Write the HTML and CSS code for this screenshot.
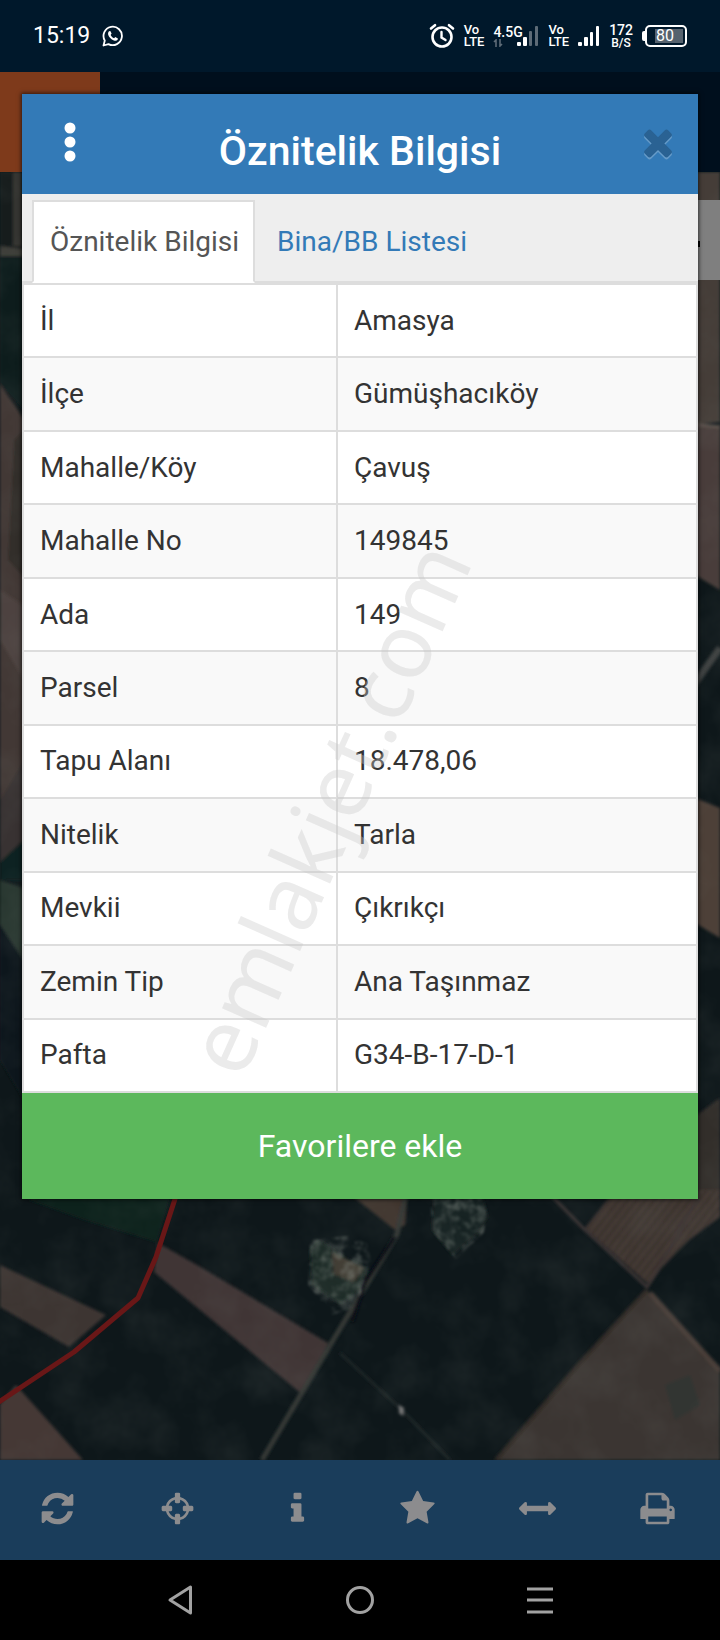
FILE: index.html
```html
<!DOCTYPE html>
<html lang="tr">
<head>
<meta charset="UTF-8">
<meta name="viewport" content="width=device-width, initial-scale=1">
<title>Öznitelik Bilgisi</title>
<link rel="stylesheet" href="styles.css">
</head>
<body>
<div class="screen">
	<div class="status">
		<span class="clock">15:19</span>
		<svg class="whatsapp" width="22" height="22" viewBox="0 0 22 22" fill="none" stroke="#fff">
			<path d="M1.500 20.500L2.800 15.600A9.200 9.200 0 1 1 6.500 19.100Z" stroke-width="1.800" stroke-linejoin="round"/>
			<path d="M7 6.200l1.300-.3 1.300 2.700-1 1.300c.8 1.600 1.900 2.600 3.500 3.300l1.200-1.200 2.600 1.400-.3 1.300c-.8 1.100-2.200 1.300-3.700.7-2.900-1.100-5-3.200-5.700-5.700-.3-1.400 0-2.700.8-3.500z" fill="#fff" stroke="none"/>
		</svg>
		<div class="status_right">
			<svg width="26" height="26" viewBox="0 0 26 26" fill="none" stroke="#fff" stroke-linecap="round">
				<circle cx="13" cy="14" r="9.500" stroke-width="2.600"/>
				<path d="M12.500 9v5.500l4 2.500" stroke-width="2.400"/>
				<path d="M2 5.500L6 2.200M24 5.500L20 2.200" stroke-width="2.600"/>
			</svg>
			<span class="net">Vo<br>LTE</span>
			<div class="mobile">
				<span class="gen">4.5G</span>
				<svg class="arrows" width="10" height="8" viewBox="0 0 10 8" fill="none" stroke="#5d6b77" stroke-width="1.600">
					<path d="M1 3l2-2v7M7 0v7l2-2"/>
				</svg>
				<svg class="bars" width="22" height="22" viewBox="0 0 22 22">
					<rect x="0" y="17" width="4" height="4" rx="1" fill="#fff"/>
					<rect x="6" y="12" width="4" height="9" rx="1" fill="#fff"/>
					<rect x="12" y="6" width="3" height="15" rx="1" fill="#5d6b77"/>
					<rect x="18" y="1" width="3" height="20" rx="1" fill="#5d6b77"/>
				</svg>
			</div>
			<span class="net">Vo<br>LTE</span>
			<svg width="22" height="22" viewBox="0 0 22 22" fill="#fff">
				<rect x="0" y="17" width="4" height="4" rx="1"/>
				<rect x="6" y="12" width="4" height="9" rx="1"/>
				<rect x="12" y="7" width="3" height="14" rx="1"/>
				<rect x="18" y="1" width="3" height="20" rx="1"/>
			</svg>
			<span class="speed">172<br><small>B/S</small></span>
			<span class="battery"><span class="level">80</span></span>
		</div>
	</div>
	<div class="topbar"><div class="logo"></div></div>
	<div class="map">
		<svg viewBox="0 172 720 1288" preserveAspectRatio="xMidYMax slice" aria-hidden="true">
			<defs>
				<filter id="soft" x="0" y="0" width="1" height="1"><feGaussianBlur stdDeviation="1.500"/></filter>
				<filter id="grass"><feTurbulence type="fractalNoise" baseFrequency=".09" numOctaves="3" seed="4"/><feColorMatrix values="0 0 0 0 .24  0 0 0 0 .27  0 0 0 0 .24  0 0 0 1.400 -.6"/><feComposite in2="SourceGraphic" operator="in"/><feGaussianBlur stdDeviation=".8"/></filter>
				<filter id="grain"><feTurbulence type="fractalNoise" baseFrequency=".02" numOctaves="4" seed="9"/><feColorMatrix values="0 0 0 0 .2  0 0 0 0 .22  0 0 0 0 .2  0 0 0 1 -.4"/></filter>
				<pattern id="plough" width="7" height="7" patternUnits="userSpaceOnUse" patternTransform="rotate(38)">
					<rect width="7" height="7" fill="#433733"/><rect width="3" height="7" fill="#3a312f"/>
				</pattern>
			</defs>
			<rect y="172" width="720" height="1288" fill="#0e171a"/>
			<g filter="url(#soft)">
				<!-- left edge -->
				<path d="M0 172h30v80H0z" fill="#121b1c"/>
				<path d="M13 172h9v74h-9z" fill="#343532"/>
				<path d="M0 246l30 4v6H0z" fill="#3c3c39"/>
				<path d="M0 256h30v160L0 384z" fill="#0b1c1f"/>
				<path d="M0 384l30 44v350L0 800z" fill="#433935"/>
				<path d="M14 440l16-16v160L8 560z" fill="#332e2b"/>
				<path d="M0 590l30 20v80L0 640z" fill="#4d423f"/>
				<path d="M0 800l30-50v90L0 870z" fill="#393330"/>
				<path d="M0 862l30-28v46L0 880z" fill="#0e2422"/>
				<path d="M0 880l30 10v80L0 925z" fill="#26342f"/>
				<path d="M0 925l30 45v140L0 1060z" fill="#10191c"/>
				<!-- right edge -->
				<path d="M690 172h30v250l-30 3z" fill="#453d39"/>
				<path d="M690 425h30v165l-30-18z" fill="#483c3a"/>
				<path d="M690 424l30 3" stroke="#5d524d" stroke-width="3"/>
				<path d="M690 690l30-42" stroke="#3c4140" stroke-width="7"/>
				<path d="M690 796l30 12v130l-30-18z" fill="#4d4139"/>
				<path d="M690 1120l30-22v102h-30z" fill="#332d2b"/>
				<!-- fields under the dialog -->
				<path d="M27 1199l145-9-15 52-72-22z" fill="#10211f"/>
				<path d="M0 1265l106 50-37 32-69-40z" fill="#3e3632"/>
				<path d="M158 1243l39 22 131 78-25 52-149-123z" fill="#403635"/>
				<path d="M0 1404l16-19 67 75H0z" fill="#453935"/>
				<path d="M345 1190h63l-3 35-10 5z" fill="#40362f"/>
				<path d="M407 1190l-10 44-62 103-73 123" fill="none" stroke="#343836" stroke-width="5"/>
				<path d="M340 1353l62 57 48 50" fill="none" stroke="#202a2c" stroke-width="2"/>
				<path d="M399 1405l5 3-1 8-4-3z" fill="#777"/>
				<path d="M395 1237l-30 45-13 40" fill="none" stroke="#071012" stroke-width="4"/>
				<path d="M310 1250l10-10 25 18 22 10-9 24-18 12-28-19z" fill="#1c2a25"/>
				<path d="M332 1252l32 16-10 14-20-8z" fill="#403a33"/>
				<path d="M434 1195h48l6 22-12 18-24 20-20-25z" fill="#152320"/>
				<path d="M615 1190h105v27l-31 23-42 43-62-55z" fill="url(#plough)"/>
				<path d="M546 1190l39 40 62 57 12-18 38-70" fill="none" stroke="#3c3534" stroke-width="3"/>
				<path d="M647 1290l73 80v90H496l82-97z" fill="#3b3530"/>
				<path d="M650 1293l70 78" stroke="#4a3e38" stroke-width="5"/>
				<path d="M665 1385l25-10 10 30-25 15z" fill="#333630"/>
				<path d="M647 1290l-68 74-83 96" fill="none" stroke="#302b27" stroke-width="4"/>
			</g>
			<path d="M310 1240l55-6 6 28-14 45-25 8-24-30zM430 1195h58l-4 38-28 26-24-28z" fill="#fff" filter="url(#grass)"/>
			<rect y="172" width="720" height="1288" filter="url(#grain)" opacity=".25"/>
			<path d="M180 1180l-5 19-19 58-18 41-64 54L-4 1404" fill="none" stroke="#691717" stroke-width="5" stroke-linejoin="round"/>
		</svg>
		<div class="map_control"></div>
	</div>
	<div class="toolbar">
		<button type="button" aria-label="Yenile"><svg class="icon" viewBox="0 0 1792 1792"><path d="M1639 1056q0 5-1 7-64 268-268 434.500t-478 166.500q-146 0-282.500-55t-243.500-157l-129 129q-19 19-45 19t-45-19-19-45v-448q0-26 19-45t45-19h448q26 0 45 19t19 45-19 45l-137 137q71 66 161 102t187 36q134 0 250-65t186-179q11-17 53-117 8-23 30-23h192q13 0 22.500 9.500t9.500 22.500zm25-800v448q0 26-19 45t-45 19h-448q-26 0-45-19t-19-45 19-45l138-138q-148-137-349-137-134 0-250 65t-186 179q-11 17-53 117-8 23-30 23h-199q-13 0-22.500-9.500t-9.500-22.500v-7q65-268 270-434.500t480-166.500q146 0 284 55.500t245 156.500l130-129q19-19 45-19t45 19 19 45z"/></svg></button>
		<button type="button" aria-label="Konum"><svg class="icon" viewBox="0 0 1792 1792"><path d="M1325 1024h-109q-26 0-45-19t-19-45v-128q0-26 19-45t45-19h109q-32-108-112.500-188.500t-188.500-112.500v109q0 26-19 45t-45 19h-128q-26 0-45-19t-19-45v-109q-108 32-188.500 112.500t-112.500 188.500h109q26 0 45 19t19 45v128q0 26-19 45t-45 19h-109q32 108 112.500 188.500t188.500 112.500v-109q0-26 19-45t45-19h128q26 0 45 19t19 45v109q108-32 188.500-112.500t112.500-188.500zm339-192v128q0 26-19 45t-45 19h-143q-37 161-154.500 278.500t-278.500 154.500v143q0 26-19 45t-45 19h-128q-26 0-45-19t-19-45v-143q-161-37-278.500-154.500t-154.500-278.500h-143q-26 0-45-19t-19-45v-128q0-26 19-45t45-19h143q37-161 154.500-278.500t278.500-154.500v-143q0-26 19-45t45-19h128q26 0 45 19t19 45v143q161 37 278.500 154.500t154.500 278.500h143q26 0 45 19t19 45z"/></svg></button>
		<button type="button" aria-label="Bilgi"><svg class="icon" viewBox="0 0 1792 1792"><path d="M1216 1344v128q0 26-19 45t-45 19h-512q-26 0-45-19t-19-45v-128q0-26 19-45t45-19h64v-384h-64q-26 0-45-19t-19-45v-128q0-26 19-45t45-19h384q26 0 45 19t19 45v576h64q26 0 45 19t19 45zm-128-1152v192q0 26-19 45t-45 19h-256q-26 0-45-19t-19-45v-192q0-26 19-45t45-19h256q26 0 45 19t19 45z"/></svg></button>
		<button type="button" aria-label="Favoriler"><svg class="icon" viewBox="0 0 1792 1792"><path d="M1728 647q0 22-26 48l-363 354 86 500q1 7 1 20 0 21-10.500 35.500t-30.500 14.500q-19 0-40-12l-449-236-449 236q-22 12-40 12-21 0-31.500-14.500t-10.500-35.500q0-6 2-20l86-500-364-354q-25-27-25-48 0-37 56-46l502-73 225-455q19-41 49-41t49 41l225 455 502 73q56 9 56 46z"/></svg></button>
		<button type="button" aria-label="Ölçüm"><svg class="icon" viewBox="0 0 1792 1792"><path d="M1792 896q0 26-19 45l-256 256q-19 19-45 19t-45-19-19-45v-128h-1024v128q0 26-19 45t-45 19-45-19l-256-256q-19-19-19-45t19-45l256-256q19-19 45-19t45 19 19 45v128h1024v-128q0-26 19-45t45-19 45 19l256 256q19 19 19 45z"/></svg></button>
		<button type="button" aria-label="Yazdır"><svg class="icon" viewBox="0 0 1792 1792"><path d="M448 1536h896v-256h-896v256zm0-640h896v-384h-160q-40 0-68-28t-28-68v-160h-640v640zm1152 64q0-26-19-45t-45-19-45 19-19 45 19 45 45 19 45-19 19-45zm128 0v416q0 13-9.500 22.500t-22.500 9.500h-224v160q0 40-28 68t-68 28h-960q-40 0-68-28t-28-68v-160h-224q-13 0-22.500-9.500t-9.500-22.500v-416q0-79 56.500-135.500t135.500-56.500h64v-544q0-40 28-68t68-28h672q40 0 88 20t76 48l152 152q28 28 48 76t20 88v256h64q79 0 135.500 56.500t56.500 135.500z"/></svg></button>
	</div>
	<div class="navbar">
		<button type="button" aria-label="Geri"><svg width="32" height="32" viewBox="0 0 32 32"><path d="M6 16L26.500 3v26z"/></svg></button>
		<button type="button" aria-label="Ana ekran"><svg width="32" height="32" viewBox="0 0 32 32"><circle cx="16" cy="16" r="12.500"/></svg></button>
		<button type="button" aria-label="Menü"><svg width="32" height="32" viewBox="0 0 32 32"><path d="M3 5h26M3 16h26M3 28h26"/></svg></button>
	</div>

	<div class="modal" role="dialog" aria-labelledby="title">
		<div class="modal_head">
			<button type="button" aria-label="Seçenekler"><svg width="12" height="40" viewBox="0 0 12 40" fill="#fff"><circle cx="6" cy="6" r="5.500"/><circle cx="6" cy="20" r="5.500"/><circle cx="6" cy="34" r="5.500"/></svg></button>
			<h1 id="title">Öznitelik Bilgisi</h1>
			<button type="button" class="close" aria-label="Kapat"><svg viewBox="0 0 1792 1792"><path d="M1490 1322q0 40-28 68l-136 136q-28 28-68 28t-68-28l-294-294-294 294q-28 28-68 28t-68-28l-136-136q-28-28-28-68t28-68l294-294-294-294q-28-28-28-68t28-68l136-136q28-28 68-28t68 28l294 294 294-294q28-28 68-28t68 28l136 136q28 28 28 68t-28 68l-294 294 294 294q28 28 28 68z"/></svg></button>
		</div>
		<div class="tabs">
			<a href="#ozellik" class="active">Öznitelik Bilgisi</a>
			<a href="#bina">Bina/BB Listesi</a>
		</div>
		<table id="ozellik">
			<tr><th scope="row">İl</th><td>Amasya</td></tr>
			<tr><th scope="row">İlçe</th><td>Gümüşhacıköy</td></tr>
			<tr><th scope="row">Mahalle/Köy</th><td>Çavuş</td></tr>
			<tr><th scope="row">Mahalle No</th><td>149845</td></tr>
			<tr><th scope="row">Ada</th><td>149</td></tr>
			<tr><th scope="row">Parsel</th><td>8</td></tr>
			<tr><th scope="row">Tapu Alanı</th><td>18.478,06</td></tr>
			<tr><th scope="row">Nitelik</th><td>Tarla</td></tr>
			<tr><th scope="row">Mevkii</th><td>Çıkrıkçı</td></tr>
			<tr><th scope="row">Zemin Tip</th><td>Ana Taşınmaz</td></tr>
			<tr><th scope="row">Pafta</th><td>G34-B-17-D-1</td></tr>
		</table>
		<button type="button" class="favorite">Favorilere ekle</button>
		<div class="watermark">emlakjet.com</div>
	</div>
</div>
</body>
</html>
```
FILE: styles.css
```css
*{
	box-sizing: border-box;
}
body{
	margin: 0;
	font-family: Roboto, "Noto Sans", sans-serif;
	font-size: 28px;
	line-height: 40px;
	color: #333;
	background: #000;
}
button{
	border: 0;
	padding: 0;
	background: none;
	font-family: inherit;
	cursor: pointer;
}
svg{
	display: block;
}
.screen{
	position: relative;
	display: flex;
	flex-direction: column;
	min-height: 100vh;
}

/* status bar */
.status{
	display: flex;
	align-items: center;
	height: 72px;
	padding: 0 33px;
	background: #00182b;
	color: #fff;
}
.clock{
	font-size: 23px;
}
.whatsapp{
	margin-left: 12px;
}
.status_right{
	display: flex;
	align-items: center;
	gap: 9px;
	margin-left: auto;
	font-weight: 500;
}
.net{
	font-size: 13px;
	line-height: 12px;
}
.mobile{
	display: grid;
	grid-template-columns: 24px 22px;
	grid-template-rows: 14px 8px;
}
.gen{
	font-size: 14px;
	line-height: 14px;
}
.arrows{
	grid-row: 2;
}
.bars{
	grid-column: 2;
	grid-row: 1 / 3;
}
.speed{
	font-size: 14px;
	line-height: 12px;
	text-align: center;
}
.speed small{
	font-size: 12px;
}
.battery{
	display: flex;
	align-items: center;
}
.battery:before{
	content: "";
	width: 3px;
	height: 10px;
	border-radius: 2px 0 0 2px;
	background: #fff;
}
.level{
	width: 42px;
	height: 22px;
	border: 2px solid #fff;
	border-radius: 5px;
	padding-right: 2px;
	background: linear-gradient(#56626e, #56626e) 8px 2px / 28px 14px no-repeat;
	font-size: 16px;
	font-weight: 400;
	line-height: 18px;
	text-align: center;
}

/* page behind the dialog */
.topbar{
	height: 100px;
	background: #000f1d;
}
.logo{
	width: 100px;
	height: 100px;
	background: #7e3a1b;
}
.map{
	position: relative;
	flex: 1;
	overflow: hidden;
}
.map > svg{
	position: absolute;
	width: 100%;
	height: 100%;
}
.map_control{
	position: absolute;
	top: 28px;
	right: 0;
	width: 80px;
	height: 80px;
	background: linear-gradient(#000, #000) 38px 41px / 22px 6px no-repeat #7f7f7f;
}
.toolbar{
	display: grid;
	grid-template-columns: repeat(6, 1fr);
	height: 100px;
	background: #1a3d5b;
}
.toolbar button{
	display: flex;
	align-items: center;
	justify-content: center;
	padding: 0 5px 3px 0;
}
.icon{
	width: 37px;
	height: 37px;
	fill: #8c8c8e;
}
.navbar{
	display: grid;
	grid-template-columns: repeat(3, 1fr);
	height: 80px;
	padding: 0 12.5%;
	background: #000;
}
.navbar button{
	display: flex;
	align-items: center;
	justify-content: center;
}
.navbar svg{
	fill: none;
	stroke: #a2a2a2;
	stroke-width: 3;
	stroke-linejoin: round;
}

/* dialog */
.modal{
	position: absolute;
	top: 94px;
	left: 22px;
	right: 22px;
	background: #fff;
	box-shadow: 0 0 4px 1px rgba(0,0,0,.6);
}
.modal_head{
	display: grid;
	grid-template-columns: 96px 1fr 96px;
	align-items: center;
	height: 100px;
	padding-bottom: 4px;
	background: #337ab7;
}
.modal_head button{
	display: flex;
	justify-content: center;
}
h1{
	margin: 0;
	padding: 18px 0 0 0;
	color: #fff;
	font-size: 41px;
	font-weight: 500;
	line-height: 48px;
	text-align: center;
}
.close{
	padding-left: 16px;
}
.close svg{
	width: 42px;
	height: 42px;
	fill: #2a6293;
	filter: drop-shadow(0 2px 0 rgba(255,255,255,.25));
}
.tabs{
	display: flex;
	gap: 4px;
	padding: 6px 10px 0;
	border-bottom: 2px solid #ddd;
	background: #eee;
}
.tabs a{
	margin-bottom: -2px;
	padding: 20px 14px 19px 16px;
	border: 2px solid transparent;
	color: #337ab7;
	text-decoration: none;
}
.tabs .active{
	border-color: #ddd #ddd #fff;
	background: #fff;
	color: #555;
}
table{
	width: 100%;
	height: 810px;
	border-collapse: collapse;
}
th, td{
	border: 2px solid #ddd;
	padding: 0 16px;
	font-weight: 400;
	text-align: left;
}
th{
	width: 314px;
}
tr:nth-child(even){
	background: #f9f9f9;
}
.favorite{
	display: block;
	width: 100%;
	height: 106px;
	background: #5cb85c;
	color: #fff;
	font-size: 32px;
}
.watermark{
	position: absolute;
	top: 713px;
	left: 45%;
	color: rgba(200,200,200,.36);
	font-family: "Noto Sans", "Open Sans", sans-serif;
	font-size: 90px;
	line-height: 1;
	transform: translate(-50%, -50%) rotate(-66deg);
	pointer-events: none;
}
```
